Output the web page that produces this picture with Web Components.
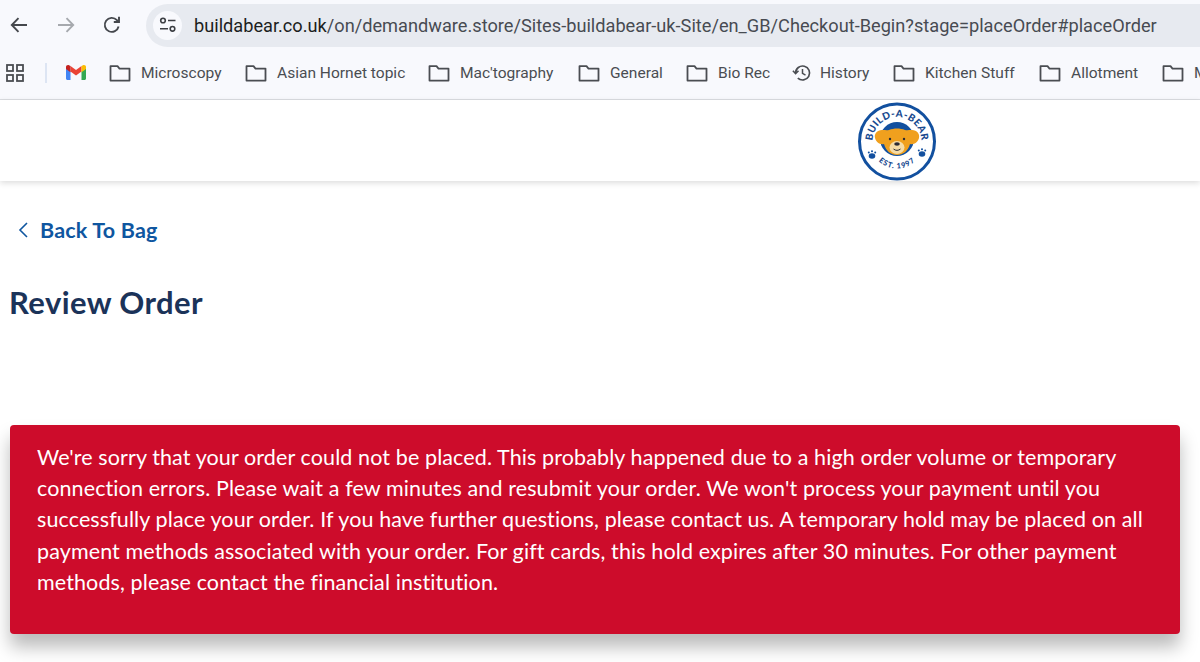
<!DOCTYPE html>
<html lang="en">
<head>
<meta charset="utf-8">
<title>Review Order</title>
<style>
  html, body { margin: 0; height: 662px; overflow: hidden; background: #fff; font-family: "Roboto", sans-serif; }
</style>
</head>
<body>
<browser-toolbar url-host="buildabear.co.uk" url-path="/on/demandware.store/Sites-buildabear-uk-Site/en_GB/Checkout-Begin?stage=placeOrder#placeOrder"></browser-toolbar>
<bookmark-bar>
  <bookmark-item style="--w:136px">Microscopy</bookmark-item>
  <bookmark-item style="--w:183px">Asian Hornet topic</bookmark-item>
  <bookmark-item style="--w:150px">Mac'tography</bookmark-item>
  <bookmark-item style="--w:108px">General</bookmark-item>
  <bookmark-item style="--w:106px">Bio Rec</bookmark-item>
  <bookmark-item style="--w:101px" icon="history">History</bookmark-item>
  <bookmark-item style="--w:146px">Kitchen Stuff</bookmark-item>
  <bookmark-item style="--w:123px">Allotment</bookmark-item>
  <bookmark-item style="--w:38px">M</bookmark-item>
</bookmark-bar>
<site-header></site-header>
<checkout-page>
  <back-link>Back To Bag</back-link>
  <page-title>Review Order</page-title>
  <error-banner>We're sorry that your order could not be placed. This probably happened due to a high order volume or temporary<br>connection errors. Please wait a few minutes and resubmit your order. We won't process your payment until you<br>successfully place your order. If you have further questions, please contact us. A temporary hold may be placed on all<br>payment methods associated with your order. For gift cards, this hold expires after 30 minutes. For other payment<br>methods, please contact the financial institution.</error-banner>
</checkout-page>

<script>
const folderIcon = `<svg width="22" height="18" viewBox="0 0 22 18" fill="none" stroke="#4a4d52" stroke-width="1.8" stroke-linejoin="round"><path d="M1.5 2.2h7l2 2.4h10v12H1.5z"/></svg>`;
const historyIcon = `<svg width="20" height="18" viewBox="0 0 20 18" fill="none" stroke="#4a4d52" stroke-width="1.7"><path d="M3.6 9a7 7 0 1 1 2.2 5.1"/><path d="M.9 6.8l2.7 2.9 2.9-2.9" stroke-width="1.6"/><path d="M10.5 5v4.4l3 1.7" stroke-width="1.5"/></svg>`;

class BrowserToolbar extends HTMLElement {
  constructor() {
    super();
    this.attachShadow({mode: 'open'});
  }

  connectedCallback() {
    this.shadowRoot.innerHTML = `
      <style>
        :host { display: flex; align-items: center; height: 50px; background: #f8f9fd; padding-left: 9px; box-sizing: border-box; }
        .nav { display: flex; align-items: center; gap: 26.5px; width: 137px; }
        svg { display: block; }
        .omni { flex: 1; height: 43px; background: #e7eaf0; border-radius: 22px 0 0 22px; display: flex; align-items: center; padding-left: 7px; }
        .tune { width: 29px; height: 29px; border-radius: 50%; background: #f8f9fd; display: flex; align-items: center; justify-content: center; margin-right: 12px; }
        .url { font: 18.2px "Roboto", sans-serif; color: #474b52; white-space: nowrap; }
        .url b { font-weight: 400; color: #1c1e21; }
      </style>
      <div class="nav">
        <svg width="20" height="20" viewBox="0 0 20 20" fill="none" stroke="#45484d" stroke-width="1.9"><path d="M18 10H3M9.5 3.2L2.8 10l6.7 6.8"/></svg>
        <svg width="20" height="20" viewBox="0 0 20 20" fill="none" stroke="#a6a9ae" stroke-width="1.9"><path d="M2 10h15M10.500 3.200l6.700 6.800-6.700 6.800"/></svg>
        <svg width="20" height="20" viewBox="0 0 20 20" fill="none" stroke="#45484d" stroke-width="1.9"><path d="M16.600 11.500a7 7 0 1 1-1.700-6.400l1.700 1.900"/><path d="M17 1.800V7h-5.200"/></svg>
      </div>
      <div class="omni">
        <div class="tune">
          <svg width="18" height="16" viewBox="0 0 18 16" fill="none" stroke="#3c3f44" stroke-width="1.6"><circle cx="4" cy="3.500" r="2.300"/><path d="M9 3.500h7.500M1 11.800h8"/><circle cx="13.500" cy="11.800" r="2.300"/></svg>
        </div>
        <span class="url"><b>${this.getAttribute('url-host')}</b>${this.getAttribute('url-path')}</span>
      </div>
    `;
  }
}

class BookmarkBar extends HTMLElement {
  constructor() {
    super();
    this.attachShadow({mode: 'open'}).innerHTML = `
      <style>
        :host { display: flex; align-items: center; height: 50px; padding-bottom: 4px; background: #f8f9fd; border-bottom: 1px solid #dcdee2; box-sizing: border-box; overflow: hidden; }
        .apps { margin: 0 21px 0 6px; flex: none; }
        .sep { width: 2px; height: 20px; background: #dde5f3; flex: none; }
        .gmail { flex: none; margin: 0 23px 0 19px; }
        svg { display: block; }
        .list { display: flex; flex: none; }
      </style>
      <svg class="apps" width="18" height="18" viewBox="0 0 18 18" fill="none" stroke="#4a4d52" stroke-width="1.8"><rect x="1" y="1" width="6" height="6"/><rect x="11" y="1" width="6" height="6"/><rect x="1" y="11" width="6" height="6"/><rect x="11" y="11" width="6" height="6"/></svg>
      <div class="sep"></div>
      <svg class="gmail" width="20" height="15" viewBox="0 0 20 15" fill="none">
        <path d="M0 3v10.500c0 .8.700 1.500 1.500 1.500H4.500V6.500z" fill="#4285f4"/>
        <path d="M15.500 6.500V15h3c.8 0 1.500-.7 1.500-1.500V3z" fill="#34a853"/>
        <path d="M4.500 6.500L10 10.500l5.500-4V1L10 5 4.500 1z" fill="#ea4335"/>
        <path d="M0 1.800V4l4.500 3.300V1L3 .2C1.700-.4 0 .4 0 1.800z" fill="#c5221f"/>
        <path d="M15.500 1v6.300L20 4V1.800c0-1.400-1.700-2.200-3-1.600z" fill="#fbbc04"/>
      </svg>
      <div class="list"><slot></slot></div>
    `;
  }
}

class BookmarkItem extends HTMLElement {
  constructor() {
    super();
    this.attachShadow({mode: 'open'});
  }

  connectedCallback() {
    const icon = this.getAttribute('icon') === 'history' ? historyIcon : folderIcon;
    const gap = this.getAttribute('icon') === 'history' ? 8 : 10;
    this.shadowRoot.innerHTML = `
      <style>
        :host { display: flex; align-items: center; gap: ${gap}px; width: var(--w); flex: none; font: 15.55px "Roboto", sans-serif; color: #4a4d52; white-space: nowrap; }
        svg { display: block; flex: none; }
      </style>
      ${icon}<slot></slot>
    `;
  }
}

class SiteHeader extends HTMLElement {
  constructor() {
    super();
    this.attachShadow({mode: 'open'}).innerHTML = `
      <style>
        :host { display: flex; justify-content: flex-end; align-items: center; height: 81px; background: #fff; box-shadow: 0 2px 6px rgba(0,0,0,.14); padding-right: 263px; box-sizing: border-box; position: relative; }
        svg { display: block; }
        text { font-family: "Lato", sans-serif; font-weight: 900; fill: #17498f; }
      </style>
      <svg width="80" height="80" viewBox="0 0 80 80">
        <circle cx="40" cy="40.500" r="37.500" fill="#fff" stroke="#12509f" stroke-width="3"/>
        <defs>
          <path id="top" d="M16 45.500a24.500 24.500 0 1 1 48 0"/>
          <path id="bottom" d="M14 47.500a26.900 26.900 0 0 0 52 0"/>
        </defs>
        <text font-size="10" letter-spacing=".4"><textPath href="#top" startOffset="50%" text-anchor="middle">BUILD-A-BEAR</textPath></text>
        <text font-size="7.500" letter-spacing=".8"><textPath href="#bottom" startOffset="50%" text-anchor="middle">EST. 1997</textPath></text>
        <circle cx="40" cy="38" r="17" fill="#12509f"/>
        <path d="M18 37c-1-4 2-8 7-8 3 0 5 .5 7 0 5-2 11-2 16 0 2 .5 4 0 7 0 5 0 8 4 7 8-1 4-5 7-9 6-2 7-7 11-13 11s-11-4-13-11c-4 1-8-2-9-6z" fill="#f0a01e"/>
        <ellipse cx="40" cy="46.500" rx="7.500" ry="6.500" fill="#f6dca6"/>
        <ellipse cx="40" cy="43" rx="2.800" ry="1.800" fill="#2b2a33"/>
        <path d="M36.500 48c2 1.800 5 1.800 7 0" stroke="#2b2a33" stroke-width="1" fill="none"/>
        <circle cx="33" cy="38" r="1.200" fill="#2b2a33"/>
        <circle cx="47" cy="38" r="1.200" fill="#2b2a33"/>
        <g fill="#12509f">
          <ellipse cx="15" cy="55" rx="3.300" ry="2.800"/><circle cx="11.800" cy="51.500" r="1"/><circle cx="15" cy="50.300" r="1"/><circle cx="18.200" cy="51.500" r="1"/>
          <ellipse cx="65" cy="53" rx="3.300" ry="2.800"/><circle cx="61.800" cy="49.500" r="1"/><circle cx="65" cy="48.300" r="1"/><circle cx="68.200" cy="49.500" r="1"/>
        </g>
      </svg>
    `;
  }
}

class CheckoutPage extends HTMLElement {
  constructor() {
    super();
    this.attachShadow({mode: 'open'}).innerHTML = `
      <style>
        :host { display: block; padding: 0 20px 0 10px; font-family: "Lato", sans-serif; }
      </style>
      <slot></slot>
    `;
  }
}

class BackLink extends HTMLElement {
  constructor() {
    super();
    this.attachShadow({mode: 'open'}).innerHTML = `
      <style>
        :host { display: flex; align-items: center; gap: 12px; padding: 33px 0 0 8px; height: 32px; font-size: 21.500px; font-weight: 700; color: #0f56a0; letter-spacing: .2px; }
        svg { display: block; flex: none; }
      </style>
      <svg width="10" height="16" viewBox="0 0 10 16" fill="none" stroke="#0f56a0" stroke-width="1.600"><path d="M9 1L2 8l7 7"/></svg>
      <slot></slot>
    `;
  }
}

class PageTitle extends HTMLElement {
  constructor() {
    super();
    this.attachShadow({mode: 'open'}).innerHTML = `
      <style>
        :host { display: block; margin-top: 36px; height: 40px; line-height: 40px; font-size: 31px; font-weight: 700; color: #1b3359; letter-spacing: .42px; margin-left: -1px; }
      </style>
      <slot></slot>
    `;
  }
}

class ErrorBanner extends HTMLElement {
  constructor() {
    super();
    this.attachShadow({mode: 'open'}).innerHTML = `
      <style>
        :host { display: block; margin-top: 103px; height: 209px; box-sizing: border-box; padding: 17px 26px 0 27px; background: #cd0c2b; border-radius: 4px; color: #fff; font-size: 21.500px; line-height: 31.200px; letter-spacing: .11px; white-space: nowrap; box-shadow: 0 13px 18px rgba(0,0,0,.27); }
      </style>
      <slot></slot>
    `;
  }
}

customElements.define('browser-toolbar', BrowserToolbar);
customElements.define('bookmark-bar', BookmarkBar);
customElements.define('bookmark-item', BookmarkItem);
customElements.define('site-header', SiteHeader);
customElements.define('checkout-page', CheckoutPage);
customElements.define('back-link', BackLink);
customElements.define('page-title', PageTitle);
customElements.define('error-banner', ErrorBanner);
</script>
</body>
</html>
